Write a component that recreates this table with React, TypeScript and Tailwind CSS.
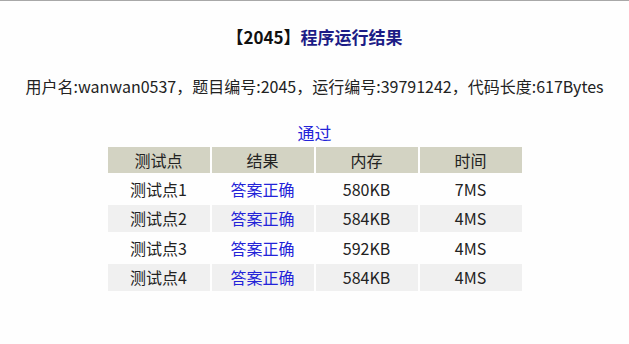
const rows = [
  { name: '测试点1', mem: '580KB', time: '7MS', alt: false },
  { name: '测试点2', mem: '584KB', time: '4MS', alt: true },
  { name: '测试点3', mem: '592KB', time: '4MS', alt: false },
  { name: '测试点4', mem: '584KB', time: '4MS', alt: true },
];

function App() {
  return (
    <div
      className="min-h-[344px] w-full bg-[#fefefe] border-t border-[#a8a8a8] text-[#222]"
      style={{ fontFamily: '"Noto Sans CJK SC", "Noto Sans", sans-serif' }}
    >
      <div className="pt-[24px] text-center text-[17px] leading-[24px] font-bold">
        <span className="text-[#111]">【2045】</span>
        <span className="text-[#1c1c86]">程序运行结果</span>
      </div>

      <p className="mt-[25px] text-center text-[16px] leading-[24px]">
        用户名:wanwan0537，题目编号:2045，运行编号:39791242，代码长度:617Bytes
      </p>

      <div className="mt-[23px] text-center text-[17px] leading-[24px] text-[#2323d8]">通过</div>

      <table className="mx-auto border-separate border-spacing-[2px] text-[16px] text-center">
        <thead>
          <tr className="bg-[#d3d3c3] h-[26px]">
            <th className="w-[102px] font-normal p-0">测试点</th>
            <th className="w-[102px] font-normal p-0">结果</th>
            <th className="w-[102px] font-normal p-0">内存</th>
            <th className="w-[102px] font-normal p-0">时间</th>
          </tr>
        </thead>
        <tbody>
          {rows.map((r) => (
            <tr key={r.name} className={r.alt ? 'bg-[#f0f0f0] h-[27.5px]' : 'h-[27.5px]'}>
              <td className="p-0">{r.name}</td>
              <td className="p-0 text-[#2323d8]">答案正确</td>
              <td className="p-0">{r.mem}</td>
              <td className="p-0">{r.time}</td>
            </tr>
          ))}
        </tbody>
      </table>
    </div>
  );
}

export default App;
